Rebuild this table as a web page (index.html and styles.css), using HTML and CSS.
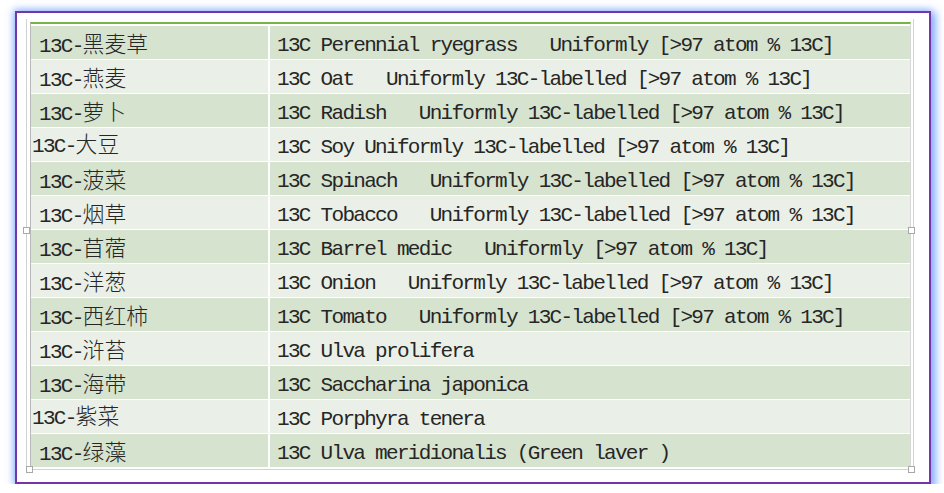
FILE: index.html
```html
<!DOCTYPE html>
<html lang="zh">
<head>
<meta charset="utf-8">
<title>13C labelled plants</title>
<link rel="stylesheet" href="styles.css">
</head>
<body>
<div class="frame">
  <div class="sheet">
    <div class="table">
      <div class="cell dark c1">13C-<span class="zh">黑麦草</span></div>
      <div class="cell dark c2">13C Perennial ryegrass   Uniformly [&gt;97 atom % 13C]</div>

      <div class="cell light c1">13C-<span class="zh">燕麦</span></div>
      <div class="cell light c2">13C Oat   Uniformly 13C-labelled [&gt;97 atom % 13C]</div>

      <div class="cell dark c1">13C-<span class="zh">萝卜</span></div>
      <div class="cell dark c2">13C Radish   Uniformly 13C-labelled [&gt;97 atom % 13C]</div>

      <div class="cell light c1 flush">13C-<span class="zh">大豆</span></div>
      <div class="cell light c2">13C Soy Uniformly 13C-labelled [&gt;97 atom % 13C]</div>

      <div class="cell dark c1">13C-<span class="zh">菠菜</span></div>
      <div class="cell dark c2">13C Spinach   Uniformly 13C-labelled [&gt;97 atom % 13C]</div>

      <div class="cell light c1">13C-<span class="zh">烟草</span></div>
      <div class="cell light c2">13C Tobacco   Uniformly 13C-labelled [&gt;97 atom % 13C]</div>

      <div class="cell dark c1">13C-<span class="zh">苜蓿</span></div>
      <div class="cell dark c2">13C Barrel medic   Uniformly [&gt;97 atom % 13C]</div>

      <div class="cell light c1">13C-<span class="zh">洋葱</span></div>
      <div class="cell light c2">13C Onion   Uniformly 13C-labelled [&gt;97 atom % 13C]</div>

      <div class="cell dark c1">13C-<span class="zh">西红柿</span></div>
      <div class="cell dark c2">13C Tomato   Uniformly 13C-labelled [&gt;97 atom % 13C]</div>

      <div class="cell light c1">13C-<span class="zh">浒苔</span></div>
      <div class="cell light c2">13C Ulva prolifera</div>

      <div class="cell dark c1">13C-<span class="zh">海带</span></div>
      <div class="cell dark c2">13C Saccharina japonica</div>

      <div class="cell light c1 flush">13C-<span class="zh">紫菜</span></div>
      <div class="cell light c2">13C Porphyra tenera</div>

      <div class="cell dark c1">13C-<span class="zh">绿藻</span></div>
      <div class="cell dark c2">13C Ulva meridionalis (Green laver )</div>
    </div>
    <span class="handle h-ml"></span>
    <span class="handle h-mr"></span>
    <span class="handle h-bl"></span>
    <span class="handle h-br"></span>
  </div>
</div>
</body>
</html>
```

FILE: styles.css
```css
html, body {
  margin: 0;
  padding: 0;
  background: #ffffff;
}

.frame {
  box-sizing: border-box;
  margin: 11px 0 0 15px;
  width: 916px;
  height: 473px;
  border: 2px solid #7236a8;
  background: #ffffff;
  box-shadow: 3px 3px 8px 2px rgba(100, 150, 255, 0.7), -1px -1px 7px 1px rgba(130, 172, 255, 0.55);
  padding: 6px 0 0 9px;
}

.sheet {
  position: relative;
  box-sizing: border-box;
  width: 888px;
  border-left: 1px solid #d2d2d2;
  border-right: 1px solid #d2d2d2;
  border-bottom: 1px solid #d2d2d2;
  padding: 3px 2px 2px 3px;
}

.table {
  display: grid;
  grid-template-columns: 237px 1fr;
  column-gap: 2px;
  row-gap: 1px;
  grid-auto-rows: 33px;
  background: #ffffff;
  border-top: 2px solid #77b345;
  border-left: 1px solid #b9b9b9;
  border-right: 1px solid #d8d8d8;
  padding-top: 2px;
}

.cell {
  font-family: "Liberation Mono", monospace;
  font-size: 21px;
  letter-spacing: -1.7px;
  color: #262626;
  white-space: pre;
  line-height: 33px;
  padding-top: 3px;
  box-sizing: border-box;
}

.dark { background: #d6e3cf; }
.light { background: #eaf0e7; }

.c1 { padding-left: 8px; padding-top: 0; }
.c1.flush { padding-left: 1px; line-height: 29px; }
.c2 { padding-left: 7px; }

.zh {
  font-family: "Noto Sans CJK SC", sans-serif;
  font-size: 21.8px;
  font-weight: 300;
  letter-spacing: 0;
}

.handle {
  position: absolute;
  box-sizing: border-box;
  width: 7px;
  height: 7px;
  background: #ffffff;
  border: 1px solid #a8a8a8;
}
.h-ml { left: -4px; top: 208px; }
.h-mr { left: 881px; top: 208px; }
.h-bl { left: -1px; top: 447px; }
.h-br { left: 881px; top: 447px; }
```
